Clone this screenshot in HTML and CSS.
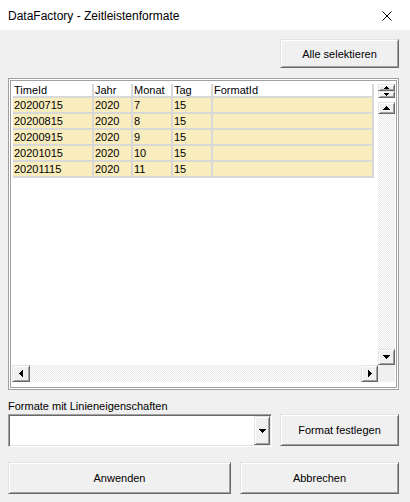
FILE: index.html
```html
<!DOCTYPE html>
<html lang="de">
<head>
<meta charset="utf-8">
<title>DataFactory - Zeitleistenformate</title>
<link rel="stylesheet" href="styles.css">
</head>
<body>
<div class="window">
  <header class="titlebar">
    <span class="title">DataFactory - Zeitleistenformate</span>
    <svg class="close" width="10" height="10" viewBox="0 0 10 10"><path d="M0.5 0.5L9.5 9.5M9.5 0.5L0.5 9.5" stroke="#000" stroke-width="1" fill="none"/></svg>
  </header>
  <main class="body">
    <div class="toprow">
      <button class="btn btn-select">Alle selektieren</button>
    </div>
    <div class="frame">
      <div class="frame-inner">
        <div class="view">
          <div class="table">
            <div class="cell hcell">TimeId</div><div class="cell hcell">Jahr</div><div class="cell hcell">Monat</div><div class="cell hcell">Tag</div><div class="cell hcell">FormatId</div>
            <div class="cell dcell">20200715</div><div class="cell dcell">2020</div><div class="cell dcell">7</div><div class="cell dcell">15</div><div class="cell dcell"></div>
            <div class="cell dcell">20200815</div><div class="cell dcell">2020</div><div class="cell dcell">8</div><div class="cell dcell">15</div><div class="cell dcell"></div>
            <div class="cell dcell">20200915</div><div class="cell dcell">2020</div><div class="cell dcell">9</div><div class="cell dcell">15</div><div class="cell dcell"></div>
            <div class="cell dcell">20201015</div><div class="cell dcell">2020</div><div class="cell dcell">10</div><div class="cell dcell">15</div><div class="cell dcell"></div>
            <div class="cell dcell">20201115</div><div class="cell dcell">2020</div><div class="cell dcell">11</div><div class="cell dcell">15</div><div class="cell dcell"></div>
          </div>
        </div>
        <div class="vscroll">
          <div class="raised spin"><svg width="5" height="3" viewBox="0 0 5 3"><path d="M2 0h1v1h1v1h1v1H0V2h1V1h1z" fill="#000"/></svg></div>
          <div class="raised spin"><svg width="5" height="3" viewBox="0 0 5 3"><path d="M0 0h5v1H4v1H3v1H2V2H1V1H0z" fill="#000"/></svg></div>
          <div class="vgap"></div>
          <div class="raised sbtn-up"><svg width="7" height="4" viewBox="0 0 7 4"><path d="M3 0h1v1h1v1h1v1h1v1H0V3h1V2h1V1h1z" fill="#000"/></svg></div>
          <div class="track vtrack"></div>
          <div class="raised sbtn-down"><svg width="7" height="4" viewBox="0 0 7 4"><path d="M0 0h7v1H6v1H5v1H4v1H3V3H2V2H1V1H0z" fill="#000"/></svg></div>
        </div>
        <div class="hscroll">
          <div class="raised sbtn-left"><svg width="4" height="7" viewBox="0 0 4 7"><path d="M3 0h1v7H3V6H2V5H1V4H0V3h1V2h1V1h1z" fill="#000"/></svg></div>
          <div class="track htrack"></div>
          <div class="raised sbtn-right"><svg width="4" height="7" viewBox="0 0 4 7"><path d="M0 0h1v1h1v1h1v1h1v1H3v1H2v1H1v1H0z" fill="#000"/></svg></div>
        </div>
        <div class="corner"></div>
      </div>
    </div>
    <div class="label">Formate mit Linieneigenschaften</div>
    <div class="combo-row">
      <div class="combo">
        <div class="raised dd-btn"><svg width="7" height="4" viewBox="0 0 7 4"><path d="M0 0h7v1H6v1H5v1H4v1H3V3H2V2H1V1H0z" fill="#000"/></svg></div>
      </div>
      <button class="btn btn-format">Format festlegen</button>
    </div>
    <div class="action-row">
      <button class="btn btn-apply">Anwenden</button>
      <button class="btn btn-cancel">Abbrechen</button>
    </div>
  </main>
</div>
</body>
</html>
```
FILE: styles.css
```css
html, body {
  margin: 0;
  padding: 0;
  background: #f0f0f0;
}
body {
  font-family: "Liberation Sans", Arial, sans-serif;
  font-size: 11px;
  color: #000;
}
.window {
  width: 410px;
  height: 502px;
  display: flex;
  flex-direction: column;
  background: #f0f0f0;
  overflow: hidden;
}
.titlebar {
  height: 30px;
  flex: none;
  box-sizing: border-box;
  background: #fff;
  display: flex;
  align-items: center;
  justify-content: space-between;
  padding: 0 18px 0 8px;
}
.title {
  font-size: 12px;
  line-height: 14px;
  margin-top: 1px;
}
.close {
  display: block;
  margin-top: 1px;
}
.body {
  flex: 1;
  display: flex;
  flex-direction: column;
  padding: 9px 11px 0 8px;
}
.toprow {
  display: flex;
  justify-content: flex-end;
}
.btn {
  box-sizing: border-box;
  margin: 0;
  padding: 0;
  font-family: "Liberation Sans", Arial, sans-serif;
  font-size: 11px;
  color: #000;
  background: #f0f0f0;
  border: 1px solid;
  border-color: #e3e3e3 #696969 #696969 #e3e3e3;
  box-shadow: inset 1px 1px #fff, inset -1px -1px #a0a0a0;
  display: flex;
  align-items: center;
  justify-content: center;
}
.btn-select {
  width: 119px;
  height: 29px;
}
.frame {
  margin-top: 10px;
  height: 312px;
  box-sizing: border-box;
  border: 1px solid #a0a0a0;
  padding: 1px;
  background: #fff;
}
.frame-inner {
  height: 100%;
  box-sizing: border-box;
  border: 1px solid #a0a0a0;
  background: #fff;
  padding: 3px 1px 5px 1px;
  display: grid;
  grid-template-columns: 1fr 17px;
  grid-template-rows: 1fr 17px;
}
.view {
  overflow: hidden;
  min-height: 0;
  min-width: 0;
}
.table {
  display: grid;
  grid-template-columns: 81px 39px 40px 40px 161px;
  margin-left: 1px;
  width: max-content;
}
.cell {
  box-sizing: border-box;
  border-right: 2px solid #d8d8d8;
  border-bottom: 2px solid #d8d8d8;
  padding-left: 1px;
  white-space: nowrap;
  overflow: hidden;
}
.hcell {
  height: 14px;
  line-height: 12px;
  background: #fff;
}
.dcell {
  height: 16px;
  line-height: 13px;
  padding-top: 1px;
  background: #f9ecbd;
}
.raised {
  box-sizing: border-box;
  background: #f0f0f0;
  border: 1px solid;
  border-color: #e3e3e3 #696969 #696969 #e3e3e3;
  box-shadow: inset 1px 1px #fff, inset -1px -1px #a0a0a0;
  display: flex;
  align-items: center;
  justify-content: center;
}
.raised svg {
  display: block;
}
.vscroll {
  display: flex;
  flex-direction: column;
  min-height: 0;
}
.spin {
  height: 7px;
  flex: none;
}
.vgap {
  height: 4px;
  flex: none;
  background: #fff;
}
.sbtn-up {
  height: 12px;
  flex: none;
}
.sbtn-down {
  height: 16px;
  flex: none;
}
.track {
  background-color: #fff;
  background-image: repeating-conic-gradient(#e8e8e8 0 25%, #fff 0 50%);
  background-size: 2px 2px;
}
.vtrack {
  flex: 1;
}
.hscroll {
  display: flex;
}
.sbtn-left {
  width: 18px;
  flex: none;
}
.sbtn-right {
  width: 17px;
  flex: none;
}
.htrack {
  flex: 1;
}
.corner {
  background: #f0f0f0;
}
.label {
  margin-top: 9px;
  height: 14px;
  line-height: 14px;
}
.combo-row {
  margin-top: 1px;
  display: flex;
  gap: 8px;
  align-items: flex-start;
}
.combo {
  width: 264px;
  height: 33px;
  box-sizing: border-box;
  background: #fff;
  border: 1px solid;
  border-color: #a0a0a0 #fff #fff #a0a0a0;
  box-shadow: inset 1px 1px #696969, inset -1px -1px #e3e3e3;
  padding: 1px;
  display: flex;
  justify-content: flex-end;
}
.dd-btn {
  width: 16px;
  height: 100%;
}
.btn-format {
  width: 119px;
  height: 32px;
}
.action-row {
  margin-top: 15px;
  display: flex;
  gap: 9px;
}
.btn-apply {
  width: 223px;
  height: 32px;
}
.btn-cancel {
  width: 159px;
  height: 32px;
}
```
